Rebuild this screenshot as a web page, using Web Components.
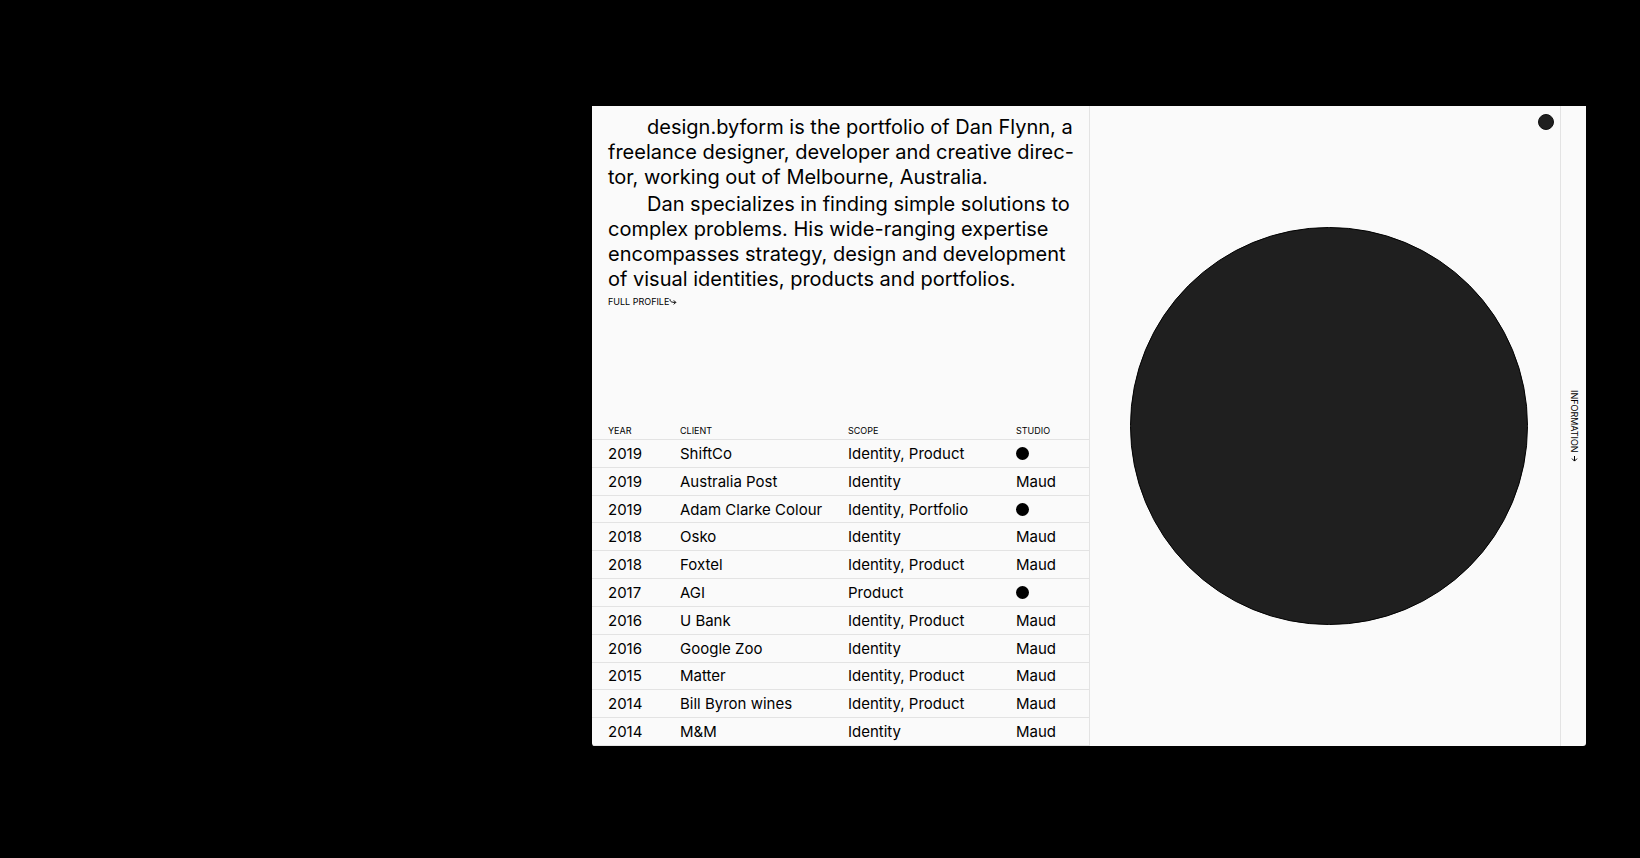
<!DOCTYPE html>
<html lang="en">
<head>
<meta charset="utf-8">
<title>design.byform</title>
<style>
html, body { margin: 0; background: #000; }
body { font-family: Inter, "Liberation Sans", sans-serif; }
</style>
</head>
<body>
<portfolio-page></portfolio-page>
<script>
const attach = (el, html) => {
  el.attachShadow({ mode: "open" }).innerHTML = html;
};

customElements.define("profile-intro", class extends HTMLElement {
  constructor() {
    super();
    attach(this, `
<style>
:host { display: block; padding: 9px 16px 0; font-size: 20px; line-height: 25px; white-space: nowrap; }
::slotted(p) { margin: 0 0 2px; text-indent: 39px; }
a { display: flex; align-items: center; width: max-content; color: inherit; text-decoration: none;
  font-size: 9px; line-height: 16px; }
svg { display: block; width: 8px; height: 8px; }
</style>
<slot></slot>
<a href="#profile">FULL PROFILE<svg viewBox="0 0 8 8" fill="none" stroke="currentColor" stroke-width="1" aria-hidden="true"><path d="M1 1.2C1 3.4 2 4.4 6.6 4.4M4.8 2.4L6.8 4.4L4.8 6.4"/></svg></a>`);
  }
});

customElements.define("work-table", class extends HTMLElement {
  constructor() {
    super();
    const works = [
      ["2019", "ShiftCo", "Identity, Product", ""],
      ["2019", "Australia Post", "Identity", "Maud"],
      ["2019", "Adam Clarke Colour", "Identity, Portfolio", ""],
      ["2018", "Osko", "Identity", "Maud"],
      ["2018", "Foxtel", "Identity, Product", "Maud"],
      ["2017", "AGI", "Product", ""],
      ["2016", "U Bank", "Identity, Product", "Maud"],
      ["2016", "Google Zoo", "Identity", "Maud"],
      ["2015", "Matter", "Identity, Product", "Maud"],
      ["2014", "Bill Byron wines", "Identity, Product", "Maud"],
      ["2014", "M&amp;M", "Identity", "Maud"]
    ];
    const rows = works.map(w => `<tr>${w.map(c => `<td>${c || '<span class="dot" role="img" aria-label="Own studio"></span>'}</td>`).join("")}</tr>`).join("");
    attach(this, `
<style>
:host { display: block; }
table { width: 100%; height: 324px; table-layout: fixed; border-collapse: separate; border-spacing: 0; text-align: left; }
col.year { width: 88px; }
col.mid { width: 168px; }
th, td { padding: 0; border-bottom: 1px solid #e3e3e3; white-space: nowrap; vertical-align: middle; }
td { padding-top: 1px; font-size: 15px; line-height: 20px; }
th { height: 17px; font-size: 9px; line-height: 16px; font-weight: 400; }
th:first-child, td:first-child { padding-left: 16px; }
.dot { display: block; width: 13px; height: 13px; border-radius: 50%; background: #000; }
</style>
<table>
<colgroup><col class="year"><col class="mid"><col class="mid"><col></colgroup>
<thead><tr><th>YEAR</th><th>CLIENT</th><th>SCOPE</th><th>STUDIO</th></tr></thead>
<tbody>${rows}</tbody>
</table>`);
  }
});

customElements.define("showcase-disc", class extends HTMLElement {
  constructor() {
    super();
    attach(this, `
<style>
:host { display: grid; place-items: center; position: relative; padding-left: 8px; }
.disc { width: 86%; aspect-ratio: 1; box-sizing: border-box; border: 1px solid #000; border-radius: 50%; background: #1f1f1f; }
button { position: absolute; top: 8px; right: 6px; width: 16px; height: 16px; padding: 0; border: 1px solid #111; border-radius: 50%; background: #1f1f1f; }
</style>
<div class="disc"></div>
<button type="button" aria-label="Menu"></button>`);
  }
});

customElements.define("side-tab", class extends HTMLElement {
  constructor() {
    super();
    attach(this, `
<style>
:host { display: grid; place-items: center; padding-left: 2px; border-left: 1px solid #e3e3e3; }
a { display: flex; align-items: center; gap: 4px; writing-mode: vertical-rl; color: inherit; text-decoration: none;
  font-size: 9px; line-height: 9px; }
svg { display: block; width: 7px; height: 6px; }
</style>
<a href="#information"><slot></slot><svg viewBox="0 0 7 6" fill="none" stroke="currentColor" stroke-width="1" aria-hidden="true"><path d="M3.5 0V5M1 2.6L3.5 5.1L6 2.6"/></svg></a>`);
  }
});

customElements.define("portfolio-page", class extends HTMLElement {
  constructor() {
    super();
    attach(this, `
<style>
:host { display: grid; grid-template-columns: 592fr 994fr 54fr; box-sizing: border-box; min-height: 100vh; padding: 106px 0 112px; background: #000; color: #000; }
main { grid-column: 2; display: grid; grid-template-columns: 498fr 470fr 26px; background: #fafafa; border-radius: 0 0 3px 3px; overflow: hidden; }
.about { display: flex; flex-direction: column; justify-content: space-between; min-width: 0; border-right: 1px solid #e3e3e3; }
</style>
<main>
<section class="about">
<profile-intro>
<p>design.byform is the portfolio of Dan Flynn, a<br>freelance designer, developer and creative direc-<br>tor, working out of Melbourne, Australia.</p>
<p>Dan specializes in finding simple solutions to<br>complex problems. His wide-ranging expertise<br>encompasses strategy, design and development<br>of visual identities, products and portfolios.</p>
</profile-intro>
<work-table></work-table>
</section>
<showcase-disc></showcase-disc>
<side-tab>INFORMATION</side-tab>
</main>`);
  }
});
</script>
</body>
</html>
